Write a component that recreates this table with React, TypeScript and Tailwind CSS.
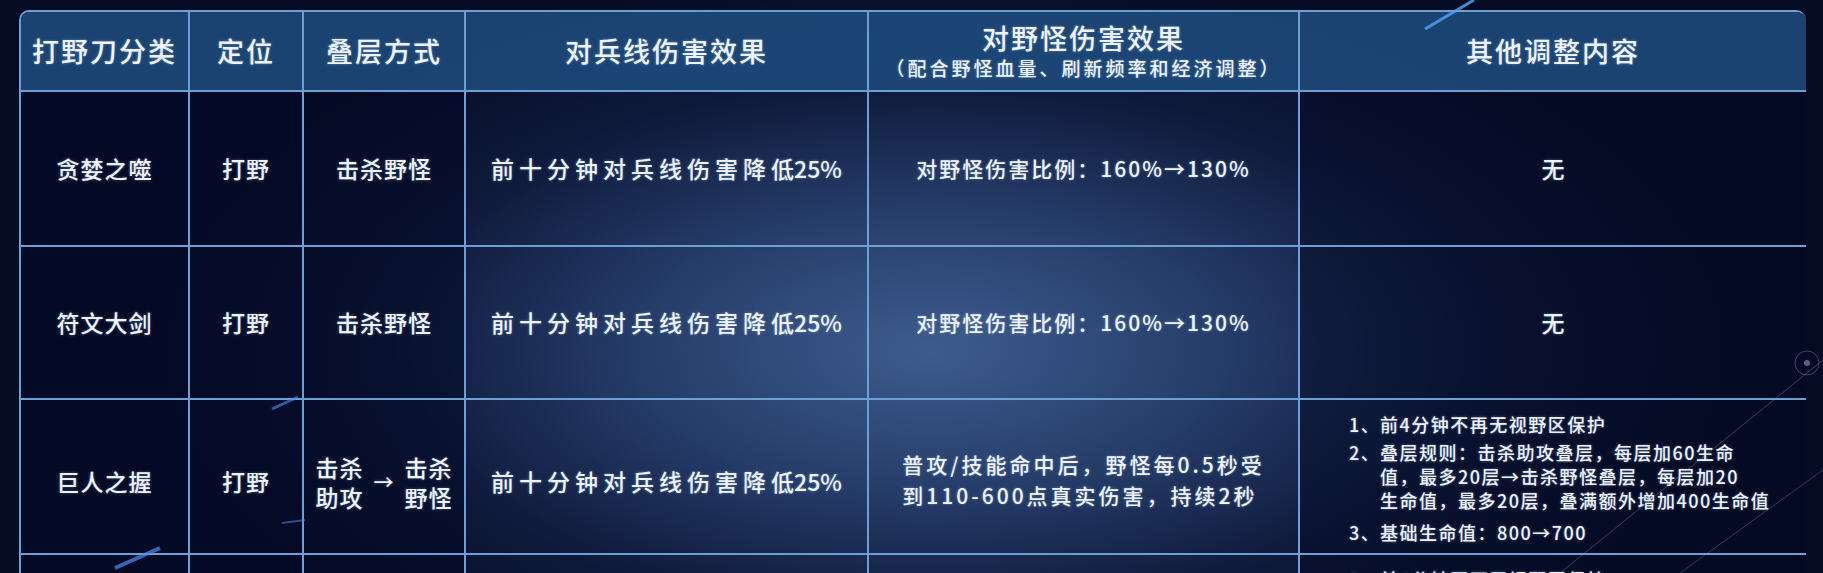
import React from "react";

const cols = "grid-cols-[169px_114px_162px_403px_431px_508px]";

function Cell({ children, className = "" }: { children?: React.ReactNode; className?: string }) {
  return (
    <div className={`flex items-center justify-center border-r-2 border-b-2 border-[#6d9fd4] text-center ${className}`}>
      {children}
    </div>
  );
}

function Notes() {
  return (
    <div className="text-left text-[18px] tracking-[1.5px] leading-[24px] font-medium">
      <div className="flex mb-[4px]">
        <span className="w-[31px] shrink-0">1、</span>
        <span>前4分钟不再无视野区保护</span>
      </div>
      <div className="flex mb-[8px]">
        <span className="w-[31px] shrink-0">2、</span>
        <span>
          叠层规则：击杀助攻叠层，每层加60生命
          <br />
          值，最多20层→击杀野怪叠层，每层加20
          <br />
          生命值，最多20层，叠满额外增加400生命值
        </span>
      </div>
      <div className="flex">
        <span className="w-[31px] shrink-0">3、</span>
        <span>基础生命值：800→700</span>
      </div>
    </div>
  );
}

function LaneText() {
  return (
    <span className="text-[23px] font-medium">
      <span className="tracking-[5px]">前十分钟对兵线伤害降</span>
      <span>低25%</span>
    </span>
  );
}

const simpleRows = [
  { name: "贪婪之噬", other: "无" },
  { name: "符文大剑", other: "无" },
];

const head = "bg-[#1f4e80]/85 text-[27px] tracking-[2px] font-medium";
const dark = "bg-[#040a26]/70 text-[23px] tracking-[1px] font-medium";

export default function App() {
  return (
    <div className="relative h-[573px] w-full overflow-hidden bg-[#050b22] font-['Noto_Sans_CJK_SC','Noto_Sans',sans-serif] text-[#eef3ff] [text-shadow:0_0_3px_rgba(160,200,255,0.45)]">
      {/* background glow */}
      <div className="absolute inset-0 bg-[radial-gradient(ellipse_800px_390px_at_930px_350px,#3d5c8e_0%,#263d6a_36%,#0f1a3c_68%,#050b22_100%)]" />

      <div className="relative pt-[10px] pl-[19px]">
        <div className={`grid ${cols} grid-rows-[80px_155px_153px_155px_155px] w-[1787px] border-l-2 border-t-2 border-[#6d9fd4] rounded-t-[10px] overflow-hidden`}>
          {/* header */}
          <Cell className={head}>打野刀分类</Cell>
          <Cell className={head}>定位</Cell>
          <Cell className={head}>叠层方式</Cell>
          <Cell className={head}>对兵线伤害效果</Cell>
          <Cell className="bg-[#1f4e80]/85 flex-col font-medium">
            <div className="text-[27px] tracking-[2px] leading-[32px] mt-[2px]">对野怪伤害效果</div>
            <div className="text-[19px] tracking-[3px] leading-[28px]">（配合野怪血量、刷新频率和经济调整）</div>
          </Cell>
          <Cell className={head}>其他调整内容</Cell>

          {simpleRows.map((r) => (
            <React.Fragment key={r.name}>
              <Cell className={dark}>{r.name}</Cell>
              <Cell className={dark}>打野</Cell>
              <Cell className="bg-[#040a26]/60 text-[23px] tracking-[1px] font-medium">击杀野怪</Cell>
              <Cell>
                <LaneText />
              </Cell>
              <Cell className="text-[21px] tracking-[2px] font-medium">对野怪伤害比例：160%→130%</Cell>
              <Cell className="bg-[#040a26]/50 text-[23px] font-medium">{r.other}</Cell>
            </React.Fragment>
          ))}

          {/* 巨人之握 */}
          <Cell className={`${dark} pt-[10px]`}>巨人之握</Cell>
          <Cell className={`${dark} pt-[10px]`}>打野</Cell>
          <Cell className="bg-[#040a26]/60 text-[23px] tracking-[1px] font-medium pt-[10px]">
            <div className="flex items-center gap-[10px] leading-[30px]">
              <div className="flex flex-col">
                <span>击杀</span>
                <span>助攻</span>
              </div>
              <span className="text-[20px]">→</span>
              <div className="flex flex-col">
                <span>击杀</span>
                <span>野怪</span>
              </div>
            </div>
          </Cell>
          <Cell className="pt-[10px]">
            <LaneText />
          </Cell>
          <Cell className="pt-[6px]">
            <div className="text-left text-[21px] tracking-[3px] leading-[31px] font-medium">
              普攻/技能命中后，野怪每0.5秒受
              <br />
              到110-600点真实伤害，持续2秒
            </div>
          </Cell>
          <Cell className="bg-[#040a26]/50 justify-start items-start pl-[49px] pt-[12px]">
            <Notes />
          </Cell>

          {/* next row, cut off by the window */}
          <Cell className="bg-[#040a26]/70" />
          <Cell className="bg-[#040a26]/70" />
          <Cell className="bg-[#040a26]/60" />
          <Cell />
          <Cell />
          <Cell className="bg-[#040a26]/50 justify-start items-start pl-[49px] pt-[12px]">
            <Notes />
          </Cell>
        </div>
      </div>

      {/* decorative streaks */}
      <svg className="pointer-events-none absolute inset-0" width="1823" height="573" viewBox="0 0 1823 573">
        <line x1="1425" y1="29" x2="1474" y2="0" stroke="#4fa6ff" strokeWidth="3" opacity="0.8" />
        <line x1="1560" y1="573" x2="1823" y2="360" stroke="#7fa8d8" strokeWidth="1" opacity="0.35" />
        <line x1="1680" y1="573" x2="1823" y2="470" stroke="#7fa8d8" strokeWidth="1" opacity="0.3" />
        <circle cx="1807" cy="363" r="12" fill="none" stroke="#7fa8d8" strokeWidth="1" opacity="0.4" />
        <circle cx="1807" cy="363" r="3" fill="#9cc2ee" opacity="0.5" />
        <line x1="115" y1="568" x2="160" y2="548" stroke="#4d8ff0" strokeWidth="4" opacity="0.7" />
        <line x1="272" y1="409" x2="298" y2="397" stroke="#4d8ff0" strokeWidth="3" opacity="0.6" />
        <line x1="282" y1="523" x2="305" y2="520" stroke="#4d8ff0" strokeWidth="2" opacity="0.5" />
      </svg>
    </div>
  );
}
